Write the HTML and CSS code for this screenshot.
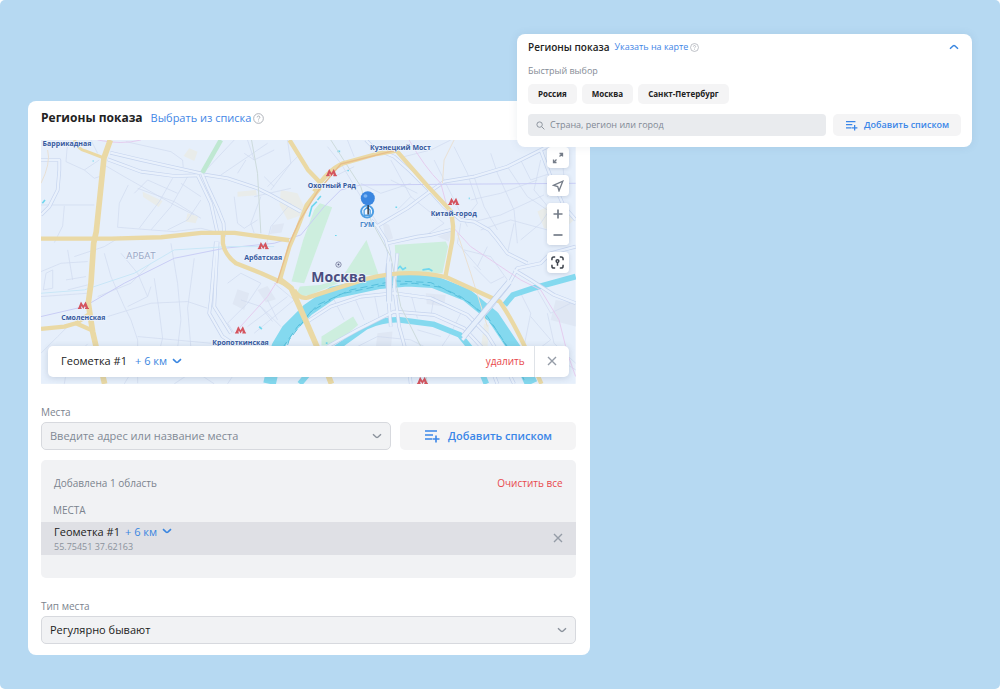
FILE: index.html
```html
<!DOCTYPE html>
<html lang="ru">
<head>
  <meta charset="UTF-8" />
  <meta name="viewport" content="width=device-width, initial-scale=1" />
  <title>Регионы показа</title>
  <link rel="stylesheet" href="styles.css">
</head>
<body>

  <svg class="sprite" aria-hidden="true">
    <symbol id="i-down" viewBox="0 0 10 6"><path d="M1 1.200L4.200 4.200Q5 4.800 5.800 4.200L9 1.200" /></symbol>
    <symbol id="i-close" viewBox="0 0 10 10"><path d="M1 1l8 8M9 1L1 9" /></symbol>
    <symbol id="i-help" viewBox="0 0 12 12"><circle cx="6" cy="6" r="5.300" /><path d="M4.500 4.800a1.500 1.500 0 1 1 2.200 1.300c-.5.300-.7.500-.7 1M6 8.300v.9" /></symbol>
    <symbol id="i-list" viewBox="0 0 16 14"><path d="M1 2h12M1 6h8M1 10h7M12 6.500v7M8.500 10h7" /></symbol>
    <symbol id="i-metro" viewBox="0 0 34 24"><path d="M0 20h2L10 1l7 12 7-12 8 19h2v3H22v-3h2l-2-6-5 9-5-9-2 6h2v3H0z" /></symbol>
  </svg>

  <main class="scene">

    <section class="card geo">
      <header class="head">
        <h2>Регионы показа</h2>
        <a href="#">Выбрать из списка</a>
        <svg class="help"><use href="#i-help" /></svg>
      </header>

      <div class="map">
        <svg class="map-canvas" viewBox="0 0 1605 732" role="img" aria-label="Карта Москвы">
          <defs>
            <g id="streets">
              <path d="M208 38L300 60 480 100M200 58L300 95 400 108 470 106M490 104L560 115 650 145 690 165 780 215" />
              <path d="M484 102L500 140 530 205 548 250 550 290M470 106L510 190 530 280" />
              <path d="M0 60h55V90L50 150 25 200 0 225" />
              <path d="M525 305L510 480 505 520 545 590 590 620" />
              <path d="M530 305L520 500 570 580" />
              <path d="M975 0L1000 25 1060 50 1110 95 1165 150 1210 200 1260 240 1300 245 1345 270 1370 300 1400 340 1460 370" />
              <path d="M1010 258L1100 205 1160 160 1210 125 1300 110 1400 80 1470 45 1560 0" />
              <path d="M990 240L1010 260 1035 300 1045 340 1038 400 1042 470 1050 560M1070 340L1060 440 1075 560 1100 650 1110 732" />
              <path d="M1040 310L1130 290 1170 285 1230 270" />
              <path d="M1265 600L1360 490 1400 440 1430 385 1500 370 1530 340 1605 320M1420 390L1470 420 1540 465 1605 490" />
              <path d="M1500 30L1530 110 1570 200 1605 240" />
              <path d="M800 545L870 500 960 470 1060 460 1170 475 1280 525 1340 585 1380 650 1420 732" />
              <path d="M860 620L950 570 1060 515 1180 525 1270 565 1330 630 1370 732" />
            </g>
          </defs>
          <rect class="land" width="1605" height="732" />

          <g class="blocks">
            <path d="M445 25l25 10-10 28-32-15zM305 155l60 28-12 18-46-30zM440 220l32 10-8 20-30-5zM590 155l55-5 3 16-58 4zM720 150l50 10 30 60-60 20-24-45z" />
            <path d="M1490 215l50-25 60 50-40 35-50-10zM1330 550l15 5-5 70-20 5z" />
          </g>
          <g class="estates">
            <path d="M590 448l35 12-15 50-35-18zM650 450l30-12 25 40-30 10zM695 255l35-5-8 28-35 4zM1025 245l20 10 12 40-22 10zM1190 290l42-15-8 30zM1155 460l60 5-5 35-52-8zM1010 580l45-5-5 55-45-5zM1545 480l60 10v70l-75-20z" />
          </g>

          <g class="parks">
            <path d="M837 190l37 12-84 228-38-5 35-125 33-90zM977 300l38 108-103-8zM777 440l60-5 140-40-170 70-45 8zM1062 315l153-10 7 15-17 80-138-5zM842 590l95-60 15 25-75 62h-35z" />
            <path class="boulevard" d="M540 0L484 99" />
          </g>

          <g class="lanes">
            <path d="M255 5L390 35 425 60 427 82M150 0L170 40M80 5L75 65 130 90 175 60M130 90l30 25 30-10M0 195h160M70 198l-5 60-25 50M190 75L250 110 400 195 460 225" />
            <path d="M262 135L235 190 230 262 330 270 400 275 480 265 520 275M290 145l110 40 80 50M280 160l40-40 90 40M395 115l-40 70-60 80M440 110l-50 90-60 70M480 180l-40 60-60 30M420 130l60 40" />
            <path d="M500 85L580 0M540 105L680 10M610 40L640 60 700 30M590 100l25-40M680 140L770 50M660 170L630 250 640 280M640 170L750 145M580 170L590 250 610 265 650 240M750 190l-60 70-15 60" />
            <path d="M0 395L60 370 140 365M80 330l15 90M100 350l90-30 50-30M15 400l20-10v55l-28 5zM75 420l60-10M80 450l60-15M0 470l140-10M190 340l20 70 40 90 20 40 20 60v130" />
            <path d="M240 340l50 60 30 70-60 30M320 470l10-30M170 470l100-40 60-60M340 415l15 100 10 80-10 40M390 310l20 120 10 110-10 85M460 355l-20 150 10 120M400 600l110 10M200 530L330 490 440 485 500 505M290 590l110 10M280 630l100 10M240 640l130-5" />
            <path d="M560 430l40-30 60 30-40 60-60 60 20 30M600 480l60 20 60 60M620 560L740 470M640 580L760 480M700 430l60 50M680 480l30 60M655 495l40 50" />
            <path d="M0 640L50 590 80 560M70 732l10-60 60-60M250 732l30-50M400 732l60-40 60 40M560 732l40-60M1400 620l50 40 60-30 95 60" />
            <path d="M860 20l40 50 60 100 50 80M920 0l20 50M880 110l60-30M1050 60l60 110-40 40M1090 50l80-20 60-30M1110 170l100 80-60 40M960 130l60 30 90-30M1050 120l80 40" />
            <path d="M1180 60l30 60 40 80 30 60M1240 20l40 80 30 90-40 50M1300 110l30 90 40 70M1350 40l20 60 50 110 10 100M1400 80l60 90 90 60M1290 180l90-20 110-40M1300 245l80-20 130-60M1320 270l90-30 110 30M1400 340l20-90M1440 300l60-50 40-60M1260 250l-10 60 70 80M1340 320l-30 60" />
            <path d="M1440 60l30 60 60-20M1500 60l-20 90 50 60M1560 20l10 90-50 60M880 480l30 60M940 470l30 70M1000 460l15 75M1110 460l20 75M1180 470l-10 60M1260 520l-25 50M1440 460l30 60-20 100M1490 450l40 70 60-30M1520 520l20 90 65 60M1470 530l60 70-80 60M1390 560l50 60M950 620l60-30 100 10 80 40M1130 570l70 20M1190 640l40-60" />
            <path d="M740 0l10 70-60 80M620 0l20 60M670 110l30 30M1270 330l80 20 50 70M1300 380l50 50 40-20" />
          </g>

          <path class="water wide" d="M686 732L711 620 741 570 801 510 877 458 1017 428 1100 421 1177 425 1277 465 1357 530 1427 635 1472 732" />
          <path class="water canal" d="M777 732Q840 650 907 610L977 560Q1030 537 1077 540L1177 553 1257 585 1297 635 1337 732" />
          <path class="water canal" d="M1392 495L1417 465 1477 445 1605 410" />
          <path class="ripple" d="M705 690L728 620 770 560 830 495 930 450 1060 423 1170 428 1260 470 1340 530 1410 635 1450 720" />
          <path class="ripple" d="M720 680L745 600 810 515 900 462 1020 437 1120 430 1200 442 1290 490 1360 560 1430 670" />
          <path class="spray" d="M805 230l8-30 15-15M830 180l10-12M155 63h3M463 105h4M4 190l8-10M922 90v4M1064 202h5M890 34h8M885 285v3M1070 387l8-8 8 10 10-6M1145 390l20-3 10 6M655 560l8 8M855 610h5M1284 175h3" />

          <use class="street-edge" href="#streets" />
          <use class="street" href="#streets" />

          <path class="line rose" d="M170 0Q240 15 300 0M1105 0Q1150 80 1200 130L1235 260 1290 320 1440 420 1500 450 1555 540 1580 640 1605 710M590 570L680 470 730 390" />
          <path class="line violet" d="M0 530L130 500 250 430 400 355 550 325 700 310 780 285 850 200 900 150 960 135 1605 130" />
          <path class="line cyan" d="M0 460L130 450 280 400 400 330 560 320 700 320" />
          <path class="line moss" d="M870 0L960 140 990 240 1050 350 1080 500 1140 620 1160 732M632 0L650 100 660 280" />
          <path class="line sand" d="M1240 0L1210 60 1205 130M1250 280L1290 400 1340 560M20 30Q30 70 0 130" />

          <g class="roads">
            <path class="thin" d="M100 0Q115 30 131 32L189 54" />
            <path class="orange" d="M716 425L746 320 770 265 797 195 837 145" />
            <path d="M208 0L189 54 166 274 158 310 150 430 142 490 155 575 191 732" />
            <path class="mid" d="M0 296H211L361 292 481 279H581L745 301M0 567L70 560 105 550 150 570M105 550L142 525" />
            <path class="mid" d="M546 285V310Q552 345 585 370L661 400 740 435" />
            <path d="M716 418L751 445 796 545 827 617 872 732" />
            <path class="mid" d="M746 0L801 89 840 130" />
            <path class="mid" d="M820 155Q860 90 907 70L1007 42 1067 32 1162 140 1232 215 1237 260 1235 300 1214 410" />
            <path class="mid" d="M760 450Q775 478 800 473L977 417Q1097 385 1217 412L1377 485Q1430 560 1502 732" />
          </g>
          <path class="bridge-edge" d="M1045 370v115M1270 588L1405 427" />
          <path class="bridge" d="M1045 365v125M1267 592L1408 423" />
          <path class="orange-line" d="M708 430L746 310 775 245 830 155 900 72 1060 32" />

          <g class="metro">
            <use href="#i-metro" x="855" y="86" width="34" height="24" />
            <use href="#i-metro" x="1222" y="172" width="34" height="24" />
            <use href="#i-metro" x="650" y="305" width="34" height="24" />
            <use href="#i-metro" x="110" y="484" width="34" height="24" />
            <use href="#i-metro" x="582" y="558" width="34" height="24" />
            <use href="#i-metro" x="1128" y="710" width="34" height="24" />
          </g>
          <g class="stations">
            <text x="78" y="19">Баррикадная</text>
            <text x="1079" y="30">Кузнецкий Мост</text>
            <text x="873" y="144">Охотный Ряд</text>
            <text x="1239" y="229">Китай-город</text>
            <text x="667" y="359">Арбатская</text>
            <text x="127" y="539">Смоленская</text>
            <text x="599" y="614">Кропоткинская</text>
          </g>
          <text class="district" x="300" y="358">АРБАТ</text>
          <circle class="center-ring" cx="893" cy="374" r="8" />
          <circle class="center-dot" cx="893" cy="374" r="3" />
          <text class="city" x="894" y="425">Москва</text>

          <text class="poi" x="979" y="261">ГУМ</text>
          <circle class="gum" cx="979" cy="215" r="18" />
          <path class="gum-mark" d="M970 226v-15l9-9 9 9v15z" />
          <path class="needle" d="M982 190v34" />
          <circle class="pin" cx="981" cy="175" r="21" />
          <ellipse class="shine" cx="974" cy="168" rx="6" ry="5" />
        </svg>

        <div class="tools">
          <button aria-label="Во весь экран"><svg viewBox="0 0 12 12"><path d="M7.500 4.500l3-3M7.500 1.500h3v3M4.500 7.500l-3 3M1.500 7.500v3h3" /></svg></button>
          <button aria-label="Моё местоположение"><svg viewBox="0 0 12 12"><path d="M1.300 5.300L10.800 1.200 7 10.800 5.700 6.600z" /></svg></button>
          <div class="zoom">
            <button aria-label="Приблизить"><svg viewBox="0 0 12 12"><path d="M6 1.500v9M1.500 6h9" /></svg></button>
            <button aria-label="Отдалить"><svg viewBox="0 0 12 12"><path d="M1.500 6h9" /></svg></button>
          </div>
          <button class="focus" aria-label="Показать метки"><svg viewBox="0 0 14 14"><path d="M1 4.500V3a2 2 0 0 1 2-2h1.500M9.500 1H11a2 2 0 0 1 2 2v1.500M13 9.500V11a2 2 0 0 1-2 2H9.500M4.500 13H3a2 2 0 0 1-2-2V9.500M7 7v3.500" /><circle cx="7" cy="5.500" r="1.500" /></svg></button>
        </div>

        <div class="mark-bar">
          <span class="mark-name">Геометка #1</span>
          <label class="radius">
            <select aria-label="Радиус"><option>+ 6 км</option></select>
            <svg><use href="#i-down" /></svg>
          </label>
          <button class="danger">удалить</button>
          <button class="close" aria-label="Закрыть"><svg><use href="#i-close" /></svg></button>
        </div>
      </div>

      <label class="caption" for="place">Места</label>
      <div class="place-row">
        <div class="field">
          <input id="place" type="text" placeholder="Введите адрес или название места" />
          <svg><use href="#i-down" /></svg>
        </div>
        <button class="add"><svg><use href="#i-list" /></svg>Добавить списком</button>
      </div>

      <div class="added">
        <div class="added-head">
          <span>Добавлена 1 область</span>
          <button class="danger">Очистить все</button>
        </div>
        <h3>МЕСТА</h3>
        <div class="added-item">
          <div>
            <div class="item-title">
              <span>Геометка #1</span>
              <label class="radius">
                <select aria-label="Радиус области"><option>+ 6 км</option></select>
                <svg><use href="#i-down" /></svg>
              </label>
            </div>
            <div class="coords">55.75451 37.62163</div>
          </div>
          <button class="remove" aria-label="Удалить область"><svg><use href="#i-close" /></svg></button>
        </div>
      </div>

      <label class="caption" for="kind">Тип места</label>
      <div class="field kind">
        <select id="kind"><option>Регулярно бывают</option></select>
        <svg><use href="#i-down" /></svg>
      </div>
    </section>

    <section class="card regions">
      <header class="head">
        <h2>Регионы показа</h2>
        <a href="#">Указать на карте</a>
        <svg class="help"><use href="#i-help" /></svg>
        <button class="collapse" aria-label="Свернуть"><svg><use href="#i-down" /></svg></button>
      </header>
      <p>Быстрый выбор</p>
      <div class="chips">
        <button>Россия</button>
        <button>Москва</button>
        <button>Санкт-Петербург</button>
      </div>
      <div class="search-row">
        <label class="search">
          <svg viewBox="0 0 10 10"><circle cx="4" cy="4" r="3" /><path d="M6.300 6.300L9.300 9.300" /></svg>
          <input type="text" aria-label="Поиск региона" placeholder="Страна, регион или город" />
        </label>
        <button class="add"><svg><use href="#i-list" /></svg>Добавить списком</button>
      </div>
    </section>

  </main>
</body>
</html>
```

FILE: styles.css
```css
* {
  box-sizing: border-box;
}
body {
  margin: 0;
  background: #fff;
  font-family: "Open Sans", "Noto Sans", sans-serif;
  font-size: 11px;
  line-height: 16px;
  color: #222;
}
svg {
  fill: none;
  stroke: currentColor;
  flex: none;
}
button,
input,
select {
  font: inherit;
  color: inherit;
  border: none;
  background: none;
  padding: 0;
  margin: 0;
}
select {
  appearance: none;
}
button {
  cursor: pointer;
}
a {
  color: #3f86e6;
  text-decoration: none;
}
h2,
h3,
p {
  margin: 0;
}
.sprite {
  position: absolute;
  width: 0;
  height: 0;
}
.scene {
  position: relative;
  min-height: 100vh;
  padding: 101px 28px 33px;
  background: #b6d9f2;
  border-radius: 5px;
}
.card {
  background: #fff;
  border-radius: 8px;
}
.head {
  display: flex;
  align-items: center;
}
.help {
  color: #a9adb5;
}

/* main card */
.geo {
  width: 59.500%;
  padding: 8px 14px 11px 13px;
}
.geo .head {
  height: 17px;
  margin-bottom: 14px;
}
.geo h2 {
  font-size: 12px;
  font-weight: 700;
  margin-right: 8px;
}
.geo .help {
  width: 11px;
  height: 11px;
  margin: 2px 0 0 2px;
}

/* map */
.map {
  position: relative;
  overflow: hidden;
}
.map-canvas {
  display: block;
  width: 100%;
}
.map-canvas path {
  stroke-linejoin: round;
}
.land {
  fill: #e6effb;
  stroke: none;
}
.blocks {
  fill: #e9ecea;
  stroke: none;
}
.estates {
  fill: #dfe7f4;
  stroke: none;
}
.parks {
  fill: #cdeede;
  stroke: none;
}
.parks .boulevard {
  stroke: #bfe8d2;
  stroke-width: 14;
}
.lanes {
  stroke: #cedaef;
  stroke-width: 2;
}
.water {
  stroke: #84d9ef;
}
.wide {
  stroke-width: 38;
}
.canal {
  stroke-width: 17;
}
.ripple {
  stroke: #55bfdc;
  stroke-width: 3;
  stroke-dasharray: 22 12;
}
.spray {
  stroke: #70d7ee;
  stroke-width: 5;
}
.street-edge {
  stroke: #c6d4ee;
  stroke-width: 11;
}
.street {
  stroke: #e9f1fc;
  stroke-width: 7;
}
.line {
  stroke-width: 3;
}
.rose {
  stroke: #e5cdef;
}
.violet {
  stroke: #c9cdf5;
}
.cyan {
  stroke: #c9e7f7;
}
.moss {
  stroke: #cddbdc;
}
.sand {
  stroke: #e9e0d3;
}
.roads {
  stroke: #ead9a5;
  stroke-width: 17;
}
.roads .mid {
  stroke-width: 13;
}
.roads .thin {
  stroke-width: 9;
}
.roads .orange {
  stroke-width: 12;
}
.orange-line {
  stroke: #e8bf8c;
  stroke-width: 4;
}
.bridge-edge {
  stroke: #bccdea;
  stroke-width: 18;
}
.bridge {
  stroke: #e6effb;
  stroke-width: 14;
}
.metro {
  fill: #d4545e;
  stroke: none;
}
.stations text,
.poi,
.district,
.city {
  text-anchor: middle;
  stroke: #eef4fd;
  stroke-width: 4;
  paint-order: stroke;
}
.stations text {
  font-size: 21px;
  font-weight: 700;
  fill: #365a9f;
}
.poi {
  font-size: 20px;
  font-weight: 700;
  fill: #4786c9;
}
.district {
  font-size: 29px;
  fill: #98a6c5;
}
.city {
  font-size: 42px;
  font-weight: 700;
  fill: #4a4d80;
}
.center-ring {
  stroke: #5b5f85;
  stroke-width: 2;
}
.center-dot {
  fill: #5b5f85;
  stroke: none;
}
.gum {
  fill: #f4f9ff;
  stroke: #4d9ee4;
  stroke-width: 6;
}
.gum-mark {
  stroke: #4d9ee4;
  stroke-width: 4;
}
.needle {
  stroke: #252b36;
  stroke-width: 4;
}
.pin {
  fill: #3a86e0;
  stroke: none;
}
.shine {
  fill: #7db4f1;
  stroke: none;
}
.tools {
  position: absolute;
  top: 7px;
  right: 7px;
  display: grid;
  gap: 7px;
  color: #747c88;
}
.tools button,
.zoom {
  width: 22px;
  background: #fff;
  border-radius: 4px;
}
.tools > button,
.zoom {
  box-shadow: 0 1px 4px rgba(60, 80, 110, 0.2);
}
.tools button {
  display: grid;
  place-items: center;
  height: 21px;
}
.tools svg {
  width: 12px;
  height: 12px;
  stroke-width: 1.300;
}
.zoom svg {
  stroke-width: 1.700;
}
.tools .focus {
  color: #3d434c;
}
.focus svg {
  width: 13px;
  height: 13px;
  stroke-width: 1.600;
  stroke-dasharray: none;
}
.mark-bar {
  position: absolute;
  left: 7px;
  right: 7px;
  bottom: 7px;
  display: flex;
  align-items: center;
  height: 31px;
  padding-left: 13px;
  background: #fff;
  border-radius: 5px;
  box-shadow: 0 1px 6px rgba(60, 80, 110, 0.2);
}
.mark-name {
  margin-right: 8px;
}
.radius {
  display: inline-flex;
  align-items: center;
  gap: 4px;
  color: #3a86e0;
}
.radius svg {
  width: 10px;
  height: 6px;
  stroke-width: 1.600;
}
.danger {
  margin-left: auto;
  font-size: 10px;
  color: #e8484c;
}
.mark-bar .danger {
  margin-right: 9px;
}
.close {
  display: grid;
  place-items: center;
  width: 35px;
  height: 31px;
  border-left: 1px solid #dfe3e8;
  color: #959ca7;
}
.close svg {
  width: 10px;
  height: 10px;
  stroke-width: 1.400;
}

/* places */
.caption {
  display: block;
  margin: 20px 0 2px;
  font-size: 10px;
  color: #7b838e;
}
.place-row {
  display: grid;
  grid-template-columns: 2fr 1fr;
  gap: 9px;
}
.field {
  display: flex;
  align-items: center;
  height: 28px;
  padding: 0 8px;
  background: #f1f2f4;
  border: 1px solid #d7d9de;
  border-radius: 5px;
  color: #8b929c;
}
.field input,
.field select {
  flex: 1;
  min-width: 0;
}
.field svg {
  width: 10px;
  height: 6px;
  stroke-width: 1.400;
}
::placeholder {
  color: #818995;
  opacity: 1;
}
.add {
  display: flex;
  align-items: center;
  justify-content: center;
  gap: 8px;
  background: #f4f4f5;
  border-radius: 5px;
  color: #3a86e8;
  font-weight: 600;
}
.add svg {
  width: 16px;
  height: 14px;
  stroke-width: 1.600;
}
.added {
  margin-top: 10px;
  padding: 14px 0 23px;
  background: #f1f2f4;
  border-radius: 5px;
}
.added-head {
  display: flex;
  align-items: center;
  height: 18px;
  padding: 0 13px;
  font-size: 10px;
  color: #7b838e;
}
.added h3 {
  margin: 10px 12px 4px;
  font-size: 10px;
  font-weight: 400;
  color: #7b838e;
}
.added-item {
  display: flex;
  align-items: center;
  justify-content: space-between;
  height: 33px;
  padding: 0 13px;
  background: #dfe0e5;
}
.item-title {
  display: flex;
  gap: 5px;
  line-height: 17px;
}
.coords {
  font-size: 9px;
  line-height: 14px;
  color: #8b929c;
}
.remove {
  color: #959ca7;
}
.remove svg {
  display: block;
  width: 10px;
  height: 10px;
  stroke-width: 1.400;
}
.kind select {
  color: #222;
}

/* region list card, lies over the map card */
.regions {
  position: absolute;
  top: 34px;
  right: 28px;
  width: 45.500%;
  padding: 5px 11px 11px;
  font-size: 9px;
  box-shadow: 0 0 8px rgba(60, 90, 130, 0.1);
}
.regions h2 {
  font-size: 10px;
  font-weight: 600;
  margin-right: 5px;
}
.regions .help {
  width: 9px;
  height: 9px;
  margin: 1px 0 0 2px;
}
.collapse {
  margin-left: auto;
  color: #3a86e0;
}
.collapse svg {
  display: block;
  width: 10px;
  height: 6px;
  margin-right: 2px;
  stroke-width: 1.500;
  transform: rotate(180deg);
}
.regions p {
  margin-top: 8px;
  color: #858c96;
}
.chips {
  display: flex;
  gap: 5px;
  margin: 5px 0 10px;
}
.chips button {
  height: 20px;
  padding: 0 10px;
  background: #f4f4f5;
  border-radius: 5px;
  font-size: 8px;
  font-weight: 700;
}
.search-row {
  display: grid;
  grid-template-columns: 7fr 3fr;
  gap: 7px;
  height: 22px;
}
.search {
  display: flex;
  align-items: center;
  gap: 5px;
  padding: 0 8px;
  background: #e9ebee;
  border-radius: 4px;
  color: #858c96;
}
.search input {
  flex: 1;
  min-width: 0;
}
.search svg {
  width: 9px;
  height: 9px;
}
.regions .add {
  gap: 6px;
}
.regions .add svg {
  width: 13px;
  height: 11px;
}
```
